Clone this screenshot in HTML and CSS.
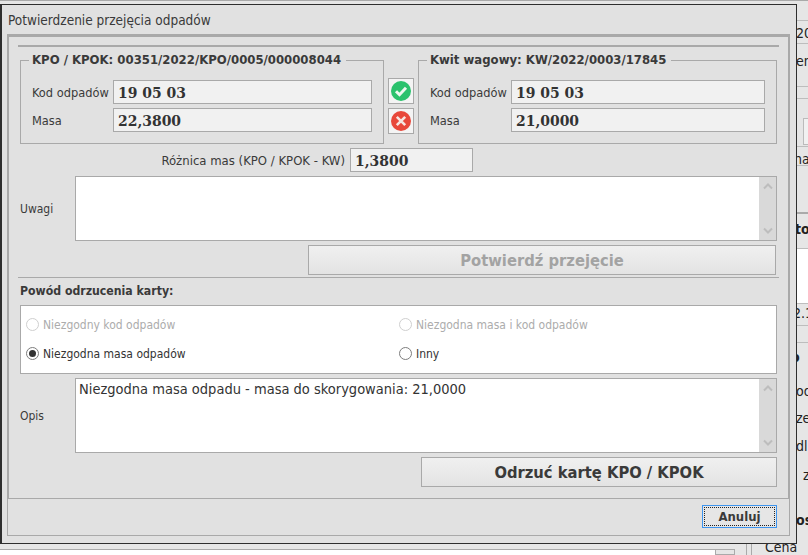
FILE: index.html
```html
<!DOCTYPE html>
<html lang="pl">
<head>
<meta charset="utf-8">
<title>Potwierdzenie przejęcia odpadów</title>
<link rel="stylesheet" href="styles.css">
</head>
<body>
<div class="backdrop">
  <div class="bg-top"></div>
  <div class="bg bg-box1"></div>
  <div class="bg bg-line l20"></div><div class="bg bg-line l43"></div><div class="bg bg-line l86"></div><div class="bg bg-line l98"></div><div class="bg bg-line l147"></div><div class="bg bg-line l165"></div><div class="bg bg-line l212"></div><div class="bg bg-line l248"></div><div class="bg bg-line l303"></div><div class="bg bg-line l325"></div><div class="bg bg-line l342"></div>
  <div class="bg bg-white"></div>
  <span class="bg bg-text t1">20</span>
  <span class="bg bg-text t2">en</span>
  <span class="bg bg-text t3">na</span>
  <span class="bg bg-text b t4">to</span>
  <span class="bg bg-text t5">2.1</span>
  <span class="bg bg-text b t6">o</span>
  <span class="bg bg-text t7">od</span>
  <span class="bg bg-text t8">ze</span>
  <span class="bg bg-text t9">dlic</span>
  <span class="bg bg-text t10">z</span>
  <span class="bg bg-text b t11">os</span>
  <span class="bg bg-text t12">Cena</span>
  <div class="bg bg-bottom"></div>
  <div class="bg bg-scroll"></div>
  <div class="bg bg-v1"></div><div class="bg bg-v2"></div>
</div>

<div class="dialog">
  <div class="title">Potwierdzenie przejęcia odpadów</div>
  <div class="panel">
    <div class="rule"></div>
    <div class="compare">
      <fieldset class="group">
        <legend>KPO / KPOK: 00351/2022/KPO/0005/000008044</legend>
        <div class="pair"><span class="lbl">Kod odpadów</span><span class="value">19 05 03</span></div>
        <div class="pair"><span class="lbl">Masa</span><span class="value">22,3800</span></div>
      </fieldset>
      <div class="marks">
        <div class="mark">
          <svg width="20" height="20" viewBox="0 0 20 20"><circle cx="10" cy="10" r="10" fill="#2bc26d"/><path d="M5 10.2 8.5 13.7 15 6.8" fill="none" stroke="#eef8f0" stroke-width="3"/></svg>
        </div>
        <div class="mark">
          <svg width="20" height="20" viewBox="0 0 20 20"><circle cx="10" cy="10" r="10" fill="#e8483b"/><path d="M5.8 5.8 14.2 14.2M14.2 5.8 5.8 14.2" fill="none" stroke="#f6e6e2" stroke-width="2.6"/></svg>
        </div>
      </div>
      <fieldset class="group">
        <legend>Kwit wagowy: KW/2022/0003/17845</legend>
        <div class="pair"><span class="lbl">Kod odpadów</span><span class="value">19 05 03</span></div>
        <div class="pair"><span class="lbl">Masa</span><span class="value">21,0000</span></div>
      </fieldset>
    </div>
    <div class="diff"><span class="diff-lbl">Różnica mas (KPO / KPOK - KW)</span><span class="value diff-val">1,3800</span></div>
    <div class="memo-row memo-uwagi">
      <span class="memo-lbl">Uwagi</span>
      <div class="memo"><div class="memo-text"></div>
        <div class="scroll">
          <svg width="12" height="8" viewBox="0 0 12 8"><path d="M2 6.5 6 2.5 10 6.5" fill="none" stroke="#bdbdbd" stroke-width="2"/></svg>
          <svg width="12" height="8" viewBox="0 0 12 8"><path d="M2 1.5 6 5.5 10 1.5" fill="none" stroke="#bdbdbd" stroke-width="2"/></svg>
        </div>
      </div>
    </div>
    <div class="action action-confirm"><button class="big disabled">Potwierdź przejęcie</button></div>
    <div class="sep"></div>
    <div class="reason-head">Powód odrzucenia karty:</div>
    <div class="radios">
      <div class="radio-item off"><span class="radio"></span>Niezgodny kod odpadów</div>
      <div class="radio-item off"><span class="radio"></span>Niezgodna masa i kod odpadów</div>
      <div class="radio-item"><span class="radio on"></span>Niezgodna masa odpadów</div>
      <div class="radio-item"><span class="radio"></span>Inny</div>
    </div>
    <div class="memo-row memo-opis">
      <span class="memo-lbl">Opis</span>
      <div class="memo"><div class="memo-text">Niezgodna masa odpadu - masa do skorygowania: 21,0000</div>
        <div class="scroll">
          <svg width="12" height="8" viewBox="0 0 12 8"><path d="M2 6.5 6 2.5 10 6.5" fill="none" stroke="#bdbdbd" stroke-width="2"/></svg>
          <svg width="12" height="8" viewBox="0 0 12 8"><path d="M2 1.5 6 5.5 10 1.5" fill="none" stroke="#bdbdbd" stroke-width="2"/></svg>
        </div>
      </div>
    </div>
    <div class="action action-reject"><button class="big">Odrzuć kartę KPO / KPOK</button></div>
  </div>
  <div class="footer"><button class="cancel"><span class="cancel-in">Anuluj</span></button></div>
</div>
</body>
</html>
```
FILE: styles.css
```css
* { box-sizing: border-box; }
html, body { margin: 0; padding: 0; }
body {
  width: 808px; height: 555px; overflow: hidden; position: relative;
  background: #e6e6e6; color: #3a3a3a;
  font-family: "DejaVu Sans Condensed", "DejaVu Sans", sans-serif;
  font-stretch: condensed; font-size: 12px;
}

/* application behind the dialog */
.backdrop { position: absolute; inset: 0; overflow: hidden; }
.bg { position: absolute; }
.bg-top { position: absolute; left: 0; top: 0; width: 100%; height: 1px; background: #a9a9a9; }
.bg-line { left: 797px; width: 11px; height: 1px; background: #bdbdbd; }
.l20 { top: 20px; } .l43 { top: 43px; } .l86 { top: 86px; } .l98 { top: 98px; }
.l147 { top: 146px; } .l165 { top: 165px; } .l212 { top: 212px; height: 2px; background: #aaa; }
.l248 { top: 248px; } .l303 { top: 303px; } .l325 { top: 325px; } .l342 { top: 342px; }
.bg-white { left: 797px; top: 249px; width: 11px; height: 54px; background: #fff; }
.bg-box1 { left: 803px; top: 118px; width: 5px; height: 27px; background: #f1f1f1; border: 1px solid #bbb; border-right: 0; }
.bg-text { left: 797px; font-size: 14px; color: #222; white-space: nowrap; line-height: 16px; }
.bg-text.b { font-weight: 700; }
.t1 { top: 25px; left: 796px; } .t2 { top: 53px; left: 796px; } .t3 { top: 151px; left: 794px; }
.t4 { top: 221px; left: 795px; } .t5 { top: 305px; left: 793px; } .t6 { top: 349px; left: 791px; }
.t7 { top: 383px; left: 796px; } .t8 { top: 410px; left: 796px; } .t9 { top: 438px; left: 796px; }
.t10 { top: 467px; left: 803px; } .t11 { top: 512px; left: 796px; } .t12 { top: 539px; left: 765px; }
.bg-bottom { left: 0; top: 549px; width: 715px; height: 6px; background: #fff; border-top: 1px solid #aaa; }
.bg-scroll { left: 715px; top: 549px; width: 20px; height: 6px; background: #e6e6e6; border: 1px solid #aaa; }
.bg-v1 { left: 746px; top: 544px; width: 1px; height: 11px; background: #aaa; }
.bg-v2 { left: 751px; top: 544px; width: 1px; height: 11px; background: #aaa; }

/* dialog */
.dialog {
  position: absolute; left: 0; top: 4px; width: 797px; height: 540px;
  border: 1px solid #2e2e2e; border-left-width: 2px;
  background: #e1e1e1; padding: 0 6px 7px 5px;
  display: flex; flex-direction: column;
}
.title { height: 29px; flex: none; font-size: 13.5px; line-height: 30px; padding-left: 1px; }
.panel {
  height: 465px; flex: none;
  border: 1px solid #a9a9a9; border-top-width: 3px; border-left-width: 2px; border-right-width: 2px;
  padding: 8px 9px 0;
  display: flex; flex-direction: column;
}
.rule { height: 2px; flex: none; background: #a9a9a9; }
.compare {
  margin: 5px 2px 0; height: 92px; flex: none;
  display: grid; grid-template-columns: 364px 26px 1fr; column-gap: 4px;
}
.group {
  margin: 0; min-width: 0; height: 92px;
  border: 1px solid #a9a9a9; padding: 0 11px;
  display: flex; flex-direction: column; gap: 4px;
}
.group legend { font-weight: 700; font-size: 13px; padding: 0 5px 0 3px; margin-left: -3px; line-height: 16px; height: 16px; }
.pair { display: flex; align-items: center; height: 24px; }
.group legend + .pair { margin-top: 12px; }
.lbl { width: 81px; flex: none; font-size: 12.7px; }
.value {
  flex: 1; height: 24px; min-width: 0;
  border: 1px solid #a9a9a9; background: #f1f1f1;
  padding-left: 4px; line-height: 23px;
  font-family: "DejaVu Serif Condensed", "DejaVu Serif", serif; font-stretch: condensed; font-weight: 700; font-size: 15.5px; color: #333;
}
.marks { display: flex; flex-direction: column; gap: 4px; padding-top: 26px; }
.mark {
  width: 26px; height: 26px; border: 1px solid #a9a9a9; background: #f4f4f4;
  display: flex; align-items: center; justify-content: center;
}
.diff { display: flex; justify-content: flex-end; align-items: center; gap: 5px; height: 24px; flex: none; margin-top: 4px; padding-right: 306px; }
.diff-lbl { font-size: 13px; }
.diff-val { flex: none; width: 123px; }
.memo-row { display: flex; align-items: center; margin: 0 2px; flex: none; }
.memo-uwagi { margin-top: 4px; height: 65px; }
.memo-opis { margin-top: 4px; height: 75px; }
.memo-lbl { width: 55px; flex: none; padding-top: 1px; }
.memo { flex: 1; height: 100%; border: 1px solid #a9a9a9; background: #fff; display: flex; min-width: 0; }
.memo-text { flex: 1; font-size: 14.5px; line-height: 16px; padding: 2px 3px; color: #333; }
.scroll {
  width: 17px; flex: none; background: #d9d9d9;
  display: flex; flex-direction: column; justify-content: space-between; align-items: center; padding: 5px 0;
}
.action { display: flex; justify-content: flex-end; margin: 4px 2px 0; height: 30px; flex: none; }
.big {
  height: 30px; margin: 0; padding: 0;
  border: 1px solid #a9a9a9;
  background: linear-gradient(#f0f0f0, #e3e3e3);
  font-family: inherit; font-stretch: condensed; font-weight: 700; font-size: 16.4px; color: #3a3a3a;
}
.action-confirm .big { width: 468px; margin-right: 1px; }
.action-reject .big { width: 356px; }
.big.disabled { color: #a3a3a3; }
.sep { height: 1px; flex: none; margin-top: 2px; background: #a9a9a9; }
.reason-head { font-weight: 700; font-size: 12.2px; height: 27px; line-height: 26px; padding-left: 2px; flex: none; }
.radios {
  margin: 0 2px; height: 69px; flex: none;
  border: 1px solid #a9a9a9; background: #fff;
  display: grid; grid-template-columns: 373px 1fr; grid-template-rows: 29px 29px;
  padding: 4px 0 0 5px;
}
.radio-item { display: flex; align-items: center; gap: 4px; color: #333; }
.radio-item.off { color: #acacac; }
.radio {
  width: 13px; height: 13px; border-radius: 50%; background: #fff; border: 1px solid #7d7d7d;
  display: flex; align-items: center; justify-content: center; flex: none;
}
.off .radio { border-color: #cfcfcf; }
.radio.on::before { content: ""; width: 7px; height: 7px; border-radius: 50%; background: #333; }
.footer {
  flex: 1; border: 1px solid #a9a9a9; border-top: 0;
  display: flex; justify-content: flex-end; padding: 6px 12px 0 0;
}
.cancel {
  width: 75px; height: 23px; margin: 0; padding: 1px;
  border: 1px solid #3d94ee; background: #e6e6e6;
  font-family: inherit; font-stretch: condensed; font-weight: 700; font-size: 13px; color: #3a3a3a;
}
.cancel-in { display: block; height: 100%; line-height: 17px; border: 1px dotted #222; }
```
